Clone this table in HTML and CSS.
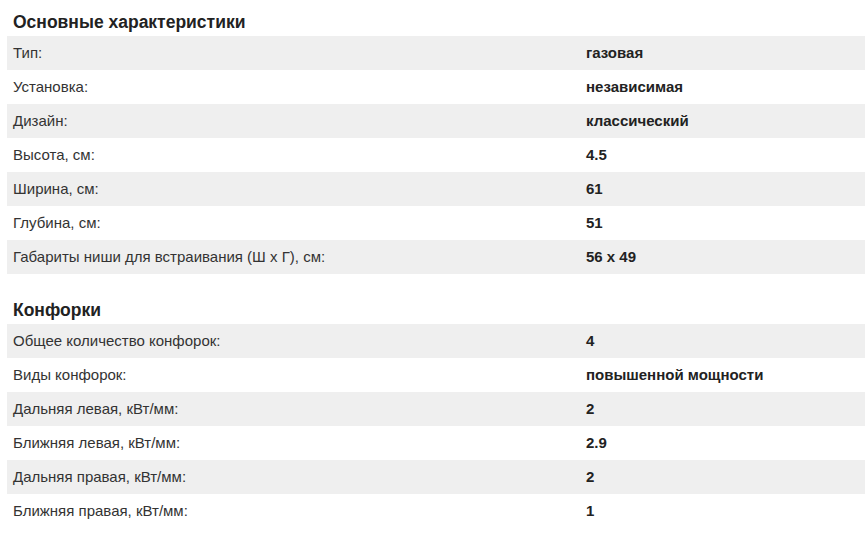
FILE: index.html
```html
<!DOCTYPE html>
<html lang="ru">
<head>
<meta charset="utf-8">
<link rel="stylesheet" href="styles.css">
</head>
<body>
<div class="specs">
  <section class="group">
    <h2 class="group-title">Основные характеристики</h2>
    <div class="table">
      <div class="row"><div class="label">Тип:</div><div class="value">газовая</div></div>
      <div class="row"><div class="label">Установка:</div><div class="value">независимая</div></div>
      <div class="row"><div class="label">Дизайн:</div><div class="value">классический</div></div>
      <div class="row"><div class="label">Высота, см:</div><div class="value">4.5</div></div>
      <div class="row"><div class="label">Ширина, см:</div><div class="value">61</div></div>
      <div class="row"><div class="label">Глубина, см:</div><div class="value">51</div></div>
      <div class="row"><div class="label">Габариты ниши для встраивания (Ш х Г), см:</div><div class="value">56 x 49</div></div>
    </div>
  </section>
  <section class="group">
    <h2 class="group-title">Конфорки</h2>
    <div class="table">
      <div class="row"><div class="label">Общее количество конфорок:</div><div class="value">4</div></div>
      <div class="row"><div class="label">Виды конфорок:</div><div class="value">повышенной мощности</div></div>
      <div class="row"><div class="label">Дальняя левая, кВт/мм:</div><div class="value">2</div></div>
      <div class="row"><div class="label">Ближняя левая, кВт/мм:</div><div class="value">2.9</div></div>
      <div class="row"><div class="label">Дальняя правая, кВт/мм:</div><div class="value">2</div></div>
      <div class="row"><div class="label">Ближняя правая, кВт/мм:</div><div class="value">1</div></div>
    </div>
  </section>
</div>
</body>
</html>
```
FILE: styles.css
```css
html, body {
  margin: 0;
  padding: 0;
  background: #fff;
}
body {
  font-family: "Liberation Sans", Arial, sans-serif;
  color: #333;
  font-size: 15px;
}
.specs {
  padding-left: 7px;
}
.group + .group {
  margin-top: 14px;
}
.group-title {
  margin: 0;
  padding: 12px 6px 4px;
  font-size: 17.5px;
  line-height: 20px;
  font-weight: bold;
  color: #222;
}
.row {
  display: grid;
  grid-template-columns: 573px 1fr;
  height: 34px;
  line-height: 34px;
}
.row:nth-child(odd) {
  background: #efefef;
}
.label {
  padding-left: 6px;
}
.value {
  padding-left: 6px;
  font-weight: bold;
  color: #222;
}
```
